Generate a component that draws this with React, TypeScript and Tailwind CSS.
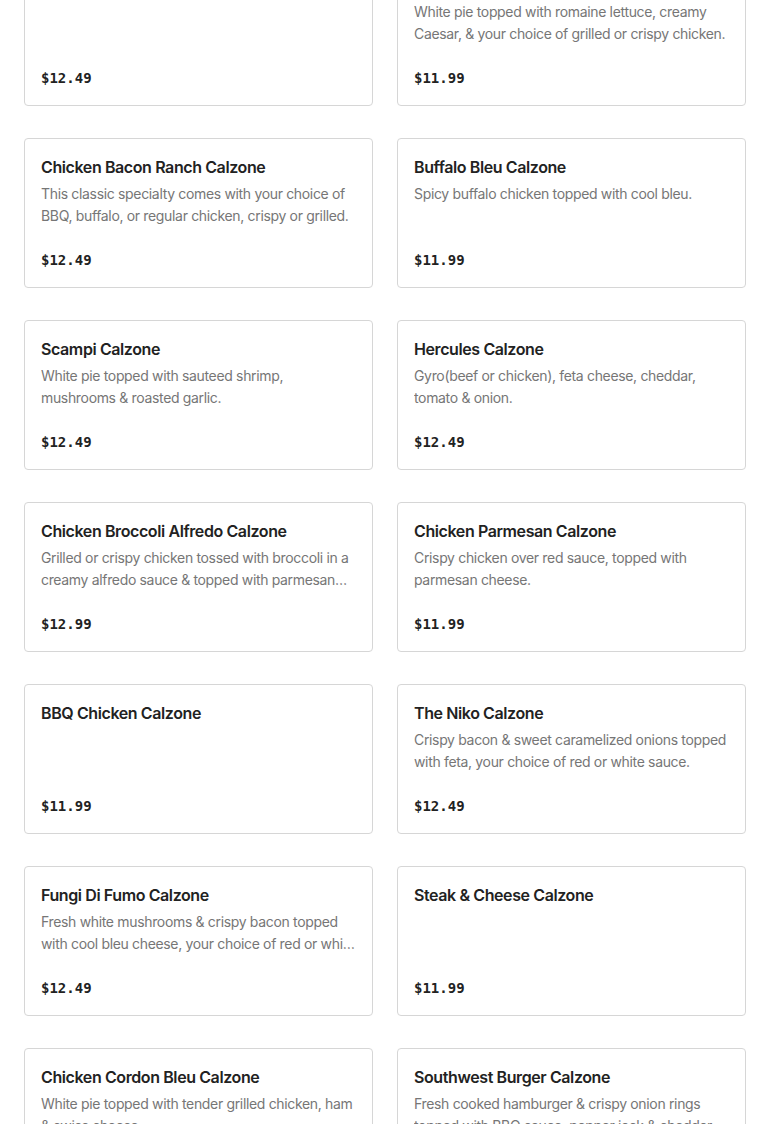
const items = [
  { name: 'Meat Lovers Calzone', desc: '', price: '$12.49' },
  {
    name: 'Chicken Caesar Calzone',
    desc: 'White pie topped with romaine lettuce, creamy Caesar, & your choice of grilled or crispy chicken.',
    price: '$11.99',
  },
  {
    name: 'Chicken Bacon Ranch Calzone',
    desc: 'This classic specialty comes with your choice of BBQ, buffalo, or regular chicken, crispy or grilled.',
    price: '$12.49',
  },
  { name: 'Buffalo Bleu Calzone', desc: 'Spicy buffalo chicken topped with cool bleu.', price: '$11.99' },
  {
    name: 'Scampi Calzone',
    desc: 'White pie topped with sauteed shrimp, mushrooms & roasted garlic.',
    price: '$12.49',
  },
  {
    name: 'Hercules Calzone',
    desc: 'Gyro(beef or chicken), feta cheese, cheddar, tomato & onion.',
    price: '$12.49',
  },
  {
    name: 'Chicken Broccoli Alfredo Calzone',
    desc: 'Grilled or crispy chicken tossed with broccoli in a creamy alfredo sauce & topped with parmesan cheese.',
    price: '$12.99',
  },
  {
    name: 'Chicken Parmesan Calzone',
    desc: 'Crispy chicken over red sauce, topped with parmesan cheese.',
    price: '$11.99',
  },
  { name: 'BBQ Chicken Calzone', desc: '', price: '$11.99' },
  {
    name: 'The Niko Calzone',
    desc: 'Crispy bacon & sweet caramelized onions topped with feta, your choice of red or white sauce.',
    price: '$12.49',
  },
  {
    name: 'Fungi Di Fumo Calzone',
    desc: 'Fresh white mushrooms & crispy bacon topped with cool bleu cheese, your choice of red or white sauce.',
    price: '$12.49',
  },
  { name: 'Steak & Cheese Calzone', desc: '', price: '$11.99' },
  {
    name: 'Chicken Cordon Bleu Calzone',
    desc: 'White pie topped with tender grilled chicken, ham & swiss cheese.',
    price: '$12.99',
  },
  {
    name: 'Southwest Burger Calzone',
    desc: 'Fresh cooked hamburger & crispy onion rings topped with BBQ sauce, pepper jack & cheddar.',
    price: '$12.99',
  },
]

export default function App() {
  return (
    <div className="h-[1124px] overflow-hidden bg-white font-['Inter','Liberation_Sans',sans-serif]">
      <div className="mt-[-44px] grid grid-cols-2 gap-x-6 gap-y-8 px-6">
        {items.map((item) => (
          <div
            key={item.name}
            className="flex h-[150px] flex-col rounded-[4px] border border-[#d6d6d6] bg-white px-4 pt-4 pb-[17px]"
          >
            <h3 className="text-[16px] leading-6 font-semibold tracking-[-0.025em] text-[#222]">{item.name}</h3>
            {item.desc && (
              <p className="mt-1 line-clamp-2 text-[14px] leading-[22px] tracking-[-0.024em] text-[#767676]">
                {item.desc}
              </p>
            )}
            <p className="mt-auto font-['DejaVu_Sans_Mono',monospace] text-[14px] leading-5 font-bold text-[#222]">
              {item.price}
            </p>
          </div>
        ))}
      </div>
    </div>
  )
}
